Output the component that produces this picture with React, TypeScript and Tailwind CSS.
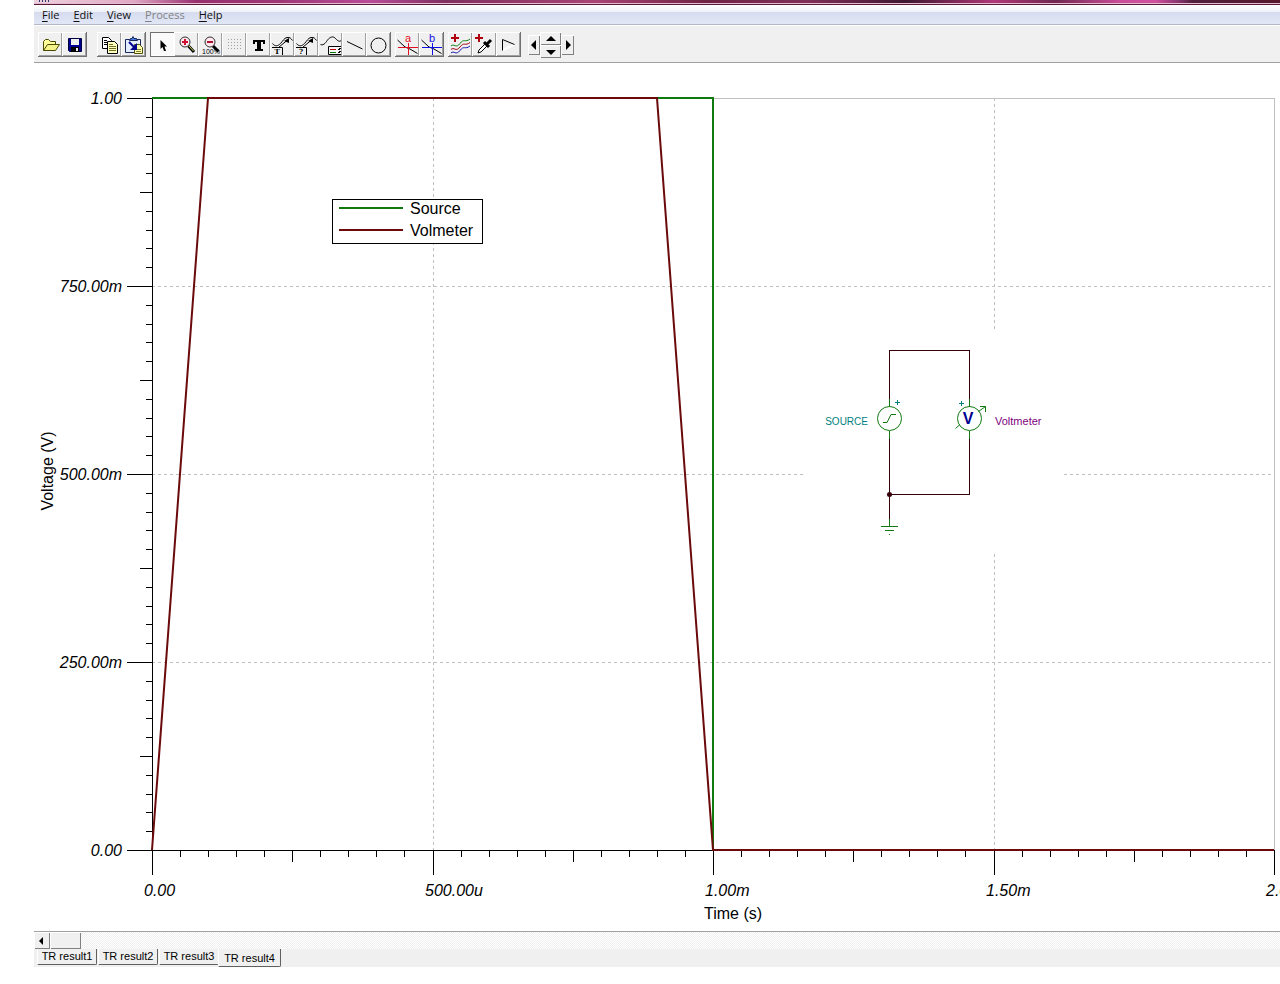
import type { ReactNode } from 'react';

const BLACK = '#000000';
const GREEN = '#107a10';
const MAROON = '#6b0a0a';

/* ---------- Toolbar icons ---------- */

function Icon({ children }: { children: ReactNode }) {
    return (
        <svg className="block w-6 h-6" viewBox="0 0 24 24" fill="none" stroke={BLACK} strokeWidth="1" aria-hidden="true">
            {children}
        </svg>
    );
}

const OpenIcon = () => (
    <Icon>
        <path d="M5.5 18.5V9.5L7.5 7.5H10.5L12.5 9.5H17.5V12.5" fill="#ffff9c" stroke="#4a4a00" />
        <path d="M5.5 18.5L9.5 12.5H21.5L17.5 18.5Z" fill="#f4f48a" stroke="#4a4a00" />
    </Icon>
);

const SaveIcon = () => (
    <Icon>
        <path d="M6.5 6.5H19.5V19.5H7.5L6.5 18.5Z" fill="#000090" stroke="#000040" />
        <path d="M9 7H17V13H9Z" fill="#f0f0f0" stroke="none" />
        <path d="M9 15H17V20H9Z" fill={BLACK} stroke="none" />
        <path d="M14 16H16V19H14Z" fill="#f0f0f0" stroke="none" />
    </Icon>
);

const CopyIcon = () => (
    <Icon>
        <path d="M5.5 5.5H11.5L14.5 8.5V16.5H5.5Z" fill="#ffffff" />
        <path d="M7 8.5H10M7 10.5H10M7 12.5H10" />
        <path d="M10.5 9.5H17.5L20.5 12.5V21.5H10.5Z" fill="#ffffc0" />
        <path d="M12 12.5H16M12 14.5H19M12 16.5H19M12 18.5H19" stroke="#707020" />
    </Icon>
);

const PasteIcon = () => (
    <Icon>
        <path d="M4.5 7.5H19.5V20.5H4.5Z" fill="#e4ecff" stroke="#182858" />
        <path d="M8.5 8.5L9.5 6.5H11L12 4.5L13 6.5H15.5L16.5 8.5Z" fill="#4878e0" stroke="#182858" />
        <path d="M13.5 12.5H18.5L21.5 15.5V21.5H13.5Z" fill="#ffffb0" stroke="#505010" />
        <path d="M15 17.5H20M15 19.5H20" stroke="#808030" />
        <path d="M8 10L14 16" stroke="#000090" strokeWidth="2" />
        <path d="M16 11V18H9Z" fill="#000090" stroke="none" />
    </Icon>
);

const PointerIcon = () => (
    <Icon>
        <path d="M10.5 8V17L12.5 15L14 19H16L14.5 14.5H17Z" fill={BLACK} stroke="none" />
    </Icon>
);

const ZoomInIcon = () => (
    <Icon>
        <path d="M14.5 14L20 20" strokeWidth="3" />
        <path d="M15 14L19.5 19" stroke="#d8d860" />
        <circle cx="11" cy="10" r="5" fill="#ffe8ee" stroke="#303030" />
        <path d="M11 7V13M8 10H14" stroke="#d01030" strokeWidth="2" />
    </Icon>
);

const ZoomOutIcon = () => (
    <Icon>
        <path d="M15 14L20.5 19.5" strokeWidth="3" />
        <circle cx="12" cy="10" r="5" fill="#ffe8ee" stroke="#303030" />
        <path d="M9 10H15" stroke="#b01030" strokeWidth="2" />
        <text x="4" y="22" fontSize="7" fill={BLACK} stroke="none" className="font-['Liberation_Sans']">100%</text>
    </Icon>
);

const GridIcon = () => (
    <Icon>
        <path
            d="M6 7.5H21M6 10.5H21M6 13.5H21M6 16.5H21"
            stroke="#a0a0a0"
            strokeDasharray="1 2"
        />
    </Icon>
);

const TextIcon = () => (
    <Icon>
        <path d="M7 8H19V12H17V10H15V17H17V19H9V17H11V10H9V12H7Z" fill={BLACK} stroke="none" />
    </Icon>
);

function CurveMarkIcon({ mark }: { mark: string }) {
    return (
        <Icon>
            <path d="M2.5 11.5C5 15 8 14 10.5 11.5S14 6 17 5.5S21 6.5 22.5 8.5" />
            <path d="M8.5 15.5L17.5 8" />
            <path d="M19 6V11L14 9Z" fill={BLACK} stroke="none" />
            <path d="M2 15.5H12.5V23" />
            <text x="7" y="22" textAnchor="middle" fontSize="7" fontWeight="bold" fill={BLACK} stroke="none" className="font-['DejaVu_Serif']">{mark}</text>
        </Icon>
    );
}

const LegendIcon = () => (
    <Icon>
        <path d="M2.5 12.5C6 14 8 10 10 7.5S15 4 17 6S21 10.5 23 8.5" />
        <path d="M23 14.5H10.5V22.5H23" fill="#f6f6f6" />
        <path d="M12 17.5H18" stroke="#c00000" />
        <path d="M12 20.5H18" stroke="#008000" />
        <path d="M20 17.5H22M20 20.5H22M21 16.5H23M21 19.5H23" />
    </Icon>
);

const LineIcon = () => (
    <Icon><path d="M5 9.5L20.5 17" /></Icon>
);

const CircleIcon = () => (
    <Icon><circle cx="12.5" cy="13.5" r="7.5" /></Icon>
);

function CursorIcon({ name, color }: { name: string; color: string }) {
    return (
        <Icon>
            <path d="M2.5 8L10 15L15 17L22.5 21.5" />
            <path d="M13.5 11V23M3 15.5H23" stroke={color} />
            <text x="13" y="10" textAnchor="middle" fontSize="11" fill={color} stroke="none" className="font-['Liberation_Sans']">{name}</text>
        </Icon>
    );
}

const AddCurvesIcon = () => (
    <Icon>
        <path d="M7 2V10M3 6H11" stroke="#b00010" strokeWidth="2" />
        <path d="M3 14C6 11 8 17 12 11.5S17 11 22 7" stroke="#108010" />
        <path d="M3 17.5C6 14.5 8 20.5 12 15S17 14.5 22 10.5" stroke="#a00010" />
        <path d="M3 21C6 18 8 24 12 18.5S17 18 22 14" stroke="#1818b0" />
    </Icon>
);

const DropperIcon = () => (
    <Icon>
        <path d="M7 2V10M3 6H11" stroke="#b00010" strokeWidth="2" />
        <path d="M6 21L7 18L14 11L16 13L9 20Z" fill="#ffffff" />
        <path d="M12 10L17 15M15 12L19 8" strokeWidth="3" />
    </Icon>
);

const FlagIcon = () => (
    <Icon>
        <path d="M6.5 18.5L18 12.5" stroke="#ffffff" strokeWidth="2" />
        <path d="M6.5 18.5V7.5L18.5 12.5" />
    </Icon>
);

/* ---------- Toolbar ---------- */

type Tool = { label: string; icon: ReactNode; pressed?: boolean };

const toolGroups: { wide?: boolean; tools: Tool[] }[] = [
    {
        wide: true,
        tools: [
            { label: 'Open', icon: <OpenIcon /> },
            { label: 'Save', icon: <SaveIcon /> },
        ],
    },
    {
        tools: [
            { label: 'Copy', icon: <CopyIcon /> },
            { label: 'Paste', icon: <PasteIcon /> },
        ],
    },
    {
        tools: [
            { label: 'Select', icon: <PointerIcon />, pressed: true },
            { label: 'Zoom in', icon: <ZoomInIcon /> },
            { label: 'Zoom 100%', icon: <ZoomOutIcon /> },
            { label: 'Grid', icon: <GridIcon /> },
            { label: 'Text', icon: <TextIcon /> },
            { label: 'Curve label', icon: <CurveMarkIcon mark="T" /> },
            { label: 'Curve query', icon: <CurveMarkIcon mark="?" /> },
            { label: 'Legend', icon: <LegendIcon /> },
            { label: 'Line', icon: <LineIcon /> },
            { label: 'Circle', icon: <CircleIcon /> },
        ],
    },
    {
        tools: [
            { label: 'Cursor a', icon: <CursorIcon name="a" color="#e01020" /> },
            { label: 'Cursor b', icon: <CursorIcon name="b" color="#1010e0" /> },
        ],
    },
    {
        tools: [
            { label: 'Add curves', icon: <AddCurvesIcon /> },
            { label: 'Pick curve', icon: <DropperIcon /> },
            { label: 'Flag', icon: <FlagIcon /> },
        ],
    },
];

function ToolButton({ tool }: { tool: Tool }) {
    return (
        <button
            type="button"
            aria-label={tool.label}
            aria-pressed={tool.pressed}
            className={`h-6 w-6 ${tool.pressed
                ? 'bg-[#fafafa] shadow-[inset_1px_1px_#707070,inset_-1px_-1px_#ffffff]'
                : 'bg-[#f0f0f0] shadow-[inset_1px_1px_#ffffff,inset_-1px_-1px_#a0a0a0]'
                }`}
        >
            {tool.icon}
        </button>
    );
}

function SpinButton({ label, points, className }: { label: string; points: string; className: string }) {
    return (
        <button
            type="button"
            aria-label={label}
            className={`flex items-center justify-center bg-[#f0f0f0] shadow-[inset_1px_1px_#ffffff,inset_-1px_-1px_#808080] ${className}`}
        >
            <svg className="w-[10px] h-[10px]" viewBox="0 0 10 10" aria-hidden="true">
                <polygon points={points} fill={BLACK} />
            </svg>
        </button>
    );
}

function Toolbar() {
    return (
        <div role="toolbar" className="flex items-start gap-1 h-[38px] pt-[6px] pl-1 bg-[#f0f0f0] border-t border-white border-b border-b-[#a0a0a0] overflow-hidden">
            {toolGroups.map((group, i) => (
                <div key={i} className={`flex shrink-0 border-r border-b border-[#707070] ${group.wide ? 'mr-[6px]' : ''}`}>
                    {group.tools.map((tool) => <ToolButton key={tool.label} tool={tool} />)}
                </div>
            ))}
            <div className="flex shrink-0 items-center pl-[3px]">
                <SpinButton label="Previous" points="2,5 7,0 7,10" className="w-3 h-5" />
                <div className="flex flex-col">
                    <SpinButton label="Up" points="0,7 5,2 10,7" className="w-[21px] h-[13px]" />
                    <SpinButton label="Down" points="0,3 5,8 10,3" className="w-[21px] h-[13px]" />
                </div>
                <SpinButton label="Next" points="8,5 3,0 3,10" className="w-[13px] h-5" />
            </div>
        </div>
    );
}

/* ---------- Window top ---------- */

const menus = ['File', 'Edit', 'View', 'Process', 'Help'];

function TitleStrip() {
    return (
        <div className="h-[5px] border-b border-[#58183c] bg-[linear-gradient(90deg,#ecd0dc_0%,#e0a8c4_8%,#983070_13%,#a03878_20%,#b84c98_27%,#803060_33%,#a84474_45%,#702444_54%,#803058_62%,#401830_70%,#b03878_77%,#702850_82%,#c84c98_87%,#d050a0_90%,#803468_92%,#50203c_93%,#58182c_100%)]">
            {/* lower edge of the clipped title text, then the glass highlight */}
            <div className="h-[3px] pl-1">
                <svg className="block" width="12" height="3" viewBox="0 0 12 3" fill="#303870" shapeRendering="crispEdges" aria-hidden="true">
                    <path d="M1 0H2V2H1ZM4 0H5V2H4ZM7 0H8V2H7ZM10 0H11V2H10Z" />
                </svg>
            </div>
            <div className="h-px bg-[#e8bcd0]" />
        </div>
    );
}

function MenuBar() {
    return (
        <nav className="flex items-center h-5 pl-px bg-[linear-gradient(#ffffff_0px,#eef1f8_7px,#d6dcee_7px,#e0e6f5_18px)] border-b border-[#b4b8c8] text-[11px] leading-4 text-[#101010] font-['Open_Sans',sans-serif]">
            {menus.map((menu) => (
                <button
                    key={menu}
                    type="button"
                    disabled={menu === 'Process'}
                    className="px-[7px] disabled:text-[#808084]"
                >
                    <span className="underline underline-offset-2">{menu[0]}</span>{menu.slice(1)}
                </button>
            ))}
        </nav>
    );
}

/* ---------- Chart ---------- */

const LEFT = 118;
const TOP = 35;
const WIDTH = 1122;
const HEIGHT = 752;
const BOTTOM = TOP + HEIGHT;
const RIGHT = LEFT + WIDTH;
const DIVISIONS = 40;

const yLabels = ['0.00', '250.00m', '500.00m', '750.00m', '1.00'];
const xLabels = ['0.00', '500.00u', '1.00m', '1.50m', '2.00m'];

// time in ms, value in volts
const sourceData = [[0, 1], [1, 1], [1, 0]];
const meterData = [[0, 0], [0.1, 1], [0.9, 1], [1, 0], [2, 0]];

const toPoints = (data: number[][]) =>
    data.map(([t, v]) => `${LEFT + Math.round((t / 2) * WIDTH)},${BOTTOM - v * HEIGHT}`).join(' ');

const tickLength = (i: number, sizes: number[]) => {
    if (i % 10 === 0) return sizes[0];
    if (i % 5 === 0) return sizes[1];
    return sizes[2];
};

// half pixels keep the hairlines sharp
const tickX = (i: number) => Math.round(LEFT + (i / DIVISIONS) * WIDTH) + 0.5;
const tickY = (i: number) => Math.round(BOTTOM - (i / DIVISIONS) * HEIGHT) + 0.5;

function Axes() {
    const steps = Array.from({ length: DIVISIONS + 1 }, (_, i) => i);

    return (
        <g shapeRendering="crispEdges" stroke={BLACK}>
            <path d={`M${LEFT} ${TOP + 0.5}H${RIGHT + 0.5}V${BOTTOM}`} fill="none" stroke="#c0c0c0" />
            {[10, 20, 30].map((i) => (
                <path key={`h${i}`} d={`M${LEFT} ${tickY(i)}H${RIGHT}`} stroke="#c0c0c0" strokeDasharray="3 3" />
            ))}
            {[10, 30].map((i) => (
                <path key={`v${i}`} d={`M${tickX(i)} ${TOP}V${BOTTOM}`} stroke="#c0c0c0" strokeDasharray="3 3" />
            ))}
            <path d={`M${LEFT + 0.5} ${TOP}V${BOTTOM}M${LEFT} ${BOTTOM + 0.5}H${RIGHT}`} />
            {steps.map((i) => (
                <path
                    key={i}
                    d={`M${tickX(i)} ${BOTTOM}v${tickLength(i, [25, 12, 7])}M${LEFT} ${tickY(i)}h${-tickLength(i, [25, 12, 6])}`}
                />
            ))}
        </g>
    );
}

function Circuit() {
    return (
        <g fill="none">
            <rect x="769" y="266" width="260" height="225" fill="#ffffff" />
            <g stroke="#380008" shapeRendering="crispEdges">
                <path d="M855.5 337V287.5H935.5V337" />
                <path d="M855.5 375V456M935.5 375V431.5H855.5" />
            </g>
            <circle cx="855.5" cy="431.5" r="2.5" fill="#380008" />
            <g stroke={GREEN}>
                <path d="M855.5 336V344M855.5 368V376M935.5 336V344M935.5 368V376M855.5 456V463M847 463.5H864M851 467.5H860M855 471.5H856" shapeRendering="crispEdges" />
                <circle cx="855.5" cy="355.5" r="12" />
                <circle cx="935.5" cy="355.5" r="12" />
                <path d="M849 359.5H853L857 351.5H862" />
                <path d="M944.5 348.5L951.5 343.5M946 343.5H951.5V349M921.5 365.5L926 361.5" />
            </g>
            <g fill="#008080" className="font-['Liberation_Sans',sans-serif]">
                <text x="834" y="362" textAnchor="end" fontSize="10">SOURCE</text>
                <path d="M861 339.5H866M863.5 337V342M925 340.5H930M927.5 338V343" stroke="#008080" />
            </g>
            <text x="934" y="361" textAnchor="middle" fontSize="16" fontWeight="bold" fill="#000090" className="font-['Liberation_Sans',sans-serif]">V</text>
            <text x="961" y="362" fontSize="11" fill="#800080" className="font-['Liberation_Sans',sans-serif]">Voltmeter</text>
        </g>
    );
}

function Legend() {
    return (
        <g fill={BLACK}>
            <rect x="298.5" y="136.5" width="150" height="44" fill="#ffffff" stroke={BLACK} />
            <path d="M305 145H369" stroke={GREEN} strokeWidth="2" />
            <path d="M305 167H369" stroke={MAROON} strokeWidth="2" />
            <text x="376" y="151">Source</text>
            <text x="376" y="173">Volmeter</text>
        </g>
    );
}

function Chart() {
    return (
        <svg
            role="img"
            aria-label="Voltage against time"
            viewBox="0 0 1246 868"
            fontSize="16"
            className="block w-full h-auto overflow-hidden bg-white font-['Liberation_Sans',sans-serif]"
        >
            <Axes />
            <polyline points={toPoints(sourceData)} fill="none" stroke={GREEN} strokeWidth="2" />
            <polyline points={toPoints(meterData)} fill="none" stroke={MAROON} strokeWidth="2" />
            <g fontStyle="italic" fill={BLACK}>
                {yLabels.map((label, i) => (
                    <text key={label} x="88" y={BOTTOM - i * 188 + 6} textAnchor="end">{label}</text>
                ))}
                {xLabels.map((label, i) => (
                    <text key={label} x={LEFT - 8 + Math.round((i * WIDTH) / 4)} y="833">{label}</text>
                ))}
            </g>
            <text x="670" y="856" fill={BLACK}>Time (s)</text>
            <text transform="translate(19 408) rotate(-90)" textAnchor="middle" fill={BLACK}>Voltage (V)</text>
            <Legend />
            <Circuit />
        </svg>
    );
}

/* ---------- Bottom ---------- */

const results = ['TR result1', 'TR result2', 'TR result3', 'TR result4'];

function ScrollBar() {
    return (
        <div className="flex h-[18px] border-t border-[#a0a0a0] bg-[repeating-conic-gradient(#f0f0f0_0_25%,#ffffff_0_50%)] bg-[length:2px_2px]">
            <SpinButton label="Scroll left" points="2,5 6,1 6,9" className="w-4" />
            <button type="button" aria-label="Scroll thumb" className="w-[31px] bg-[#f0f0f0] shadow-[inset_1px_1px_#ffffff,inset_-1px_-1px_#808080]" />
        </div>
    );
}

function ResultTabs() {
    return (
        <div role="tablist" className="flex items-start gap-px h-[18px] pl-[3px] bg-[#f0f0f0] text-[11px] leading-3 text-black font-['Liberation_Sans',sans-serif]">
            {results.map((name) => {
                const active = name === 'TR result4';
                return (
                    <button
                        key={name}
                        type="button"
                        role="tab"
                        aria-selected={active}
                        className={`flex justify-center bg-[#f0f0f0] border-l border-l-white border-r border-b border-r-[#606060] border-b-[#606060] rounded-br-xs whitespace-nowrap ${active ? '-ml-[2px] w-[63px] h-[18px] pt-[3px]' : 'w-[60px] h-4 pt-px'}`}
                    >
                        {name}
                    </button>
                );
            })}
        </div>
    );
}

export default function App() {
    return (
        <div className="min-h-screen bg-white pl-[34px]">
            <TitleStrip />
            <MenuBar />
            <Toolbar />
            <main>
                <Chart />
            </main>
            <ScrollBar />
            <ResultTabs />
        </div>
    );
}
